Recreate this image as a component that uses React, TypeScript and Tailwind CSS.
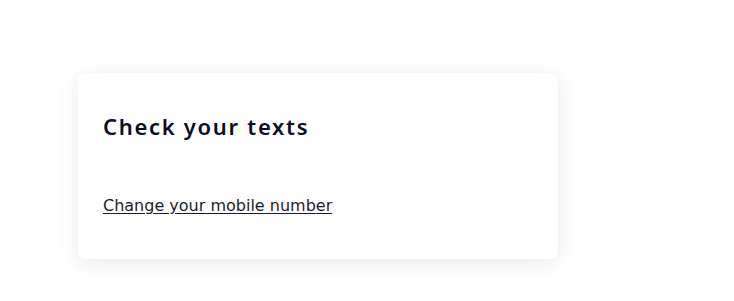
export default function App() {
  return (
    <div className="w-[734px] h-[301px] bg-white pt-[73px] pl-[78px]">
      <div className="w-[480px] h-[186px] bg-white rounded-lg shadow-[0_4px_24px_rgba(0,0,0,0.09)] px-[25px] pt-[39px]">
        <h1 className="text-[22px] leading-[28px] font-semibold tracking-[1.7px] text-[#0b0c1f]" style={{ fontFamily: '"Noto Sans", sans-serif' }}>Check your texts</h1>
        <a href="#" className="inline-block mt-[54px] text-[16px] leading-[24px] font-normal text-[#1c1c2c] underline underline-offset-2" style={{ fontFamily: '"DejaVu Sans", sans-serif' }}>Change your mobile number</a>
      </div>
    </div>
  );
}
